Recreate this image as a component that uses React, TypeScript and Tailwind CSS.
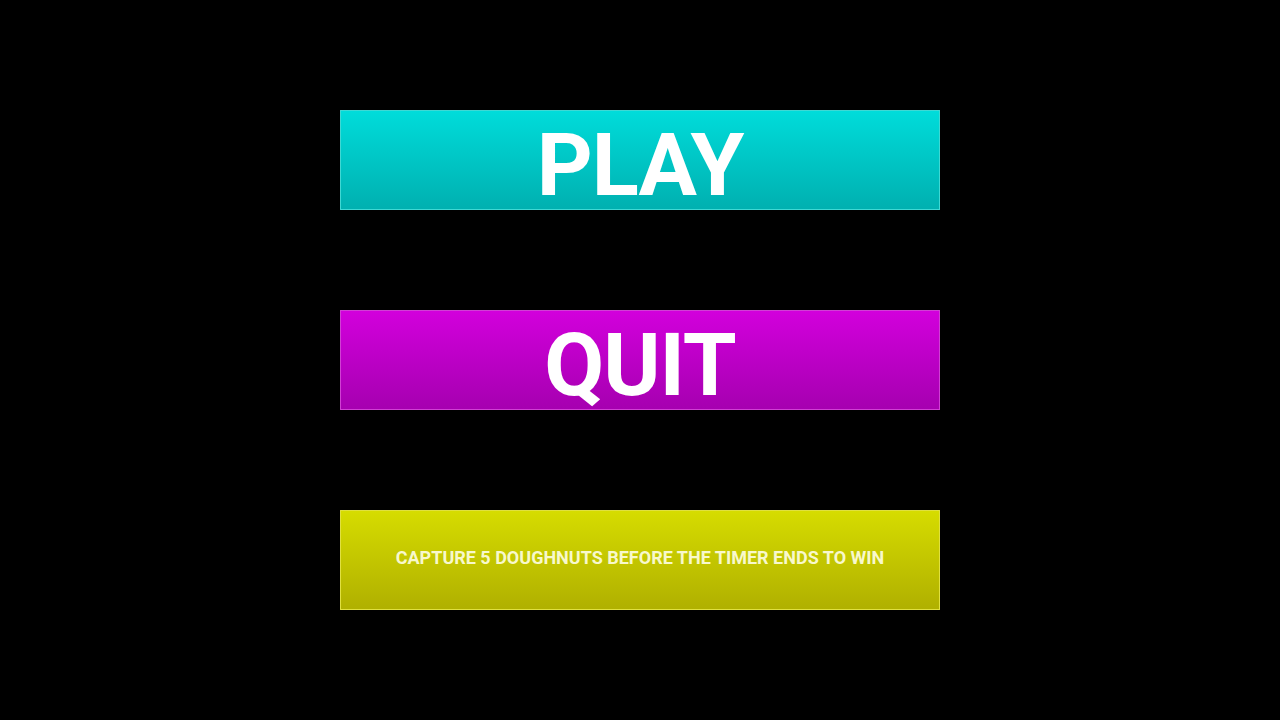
const font = { fontFamily: 'Roboto, "Liberation Sans", sans-serif' };

function App() {
  return (
    <div className="w-full h-[720px] bg-black flex flex-col items-center pt-[110px] gap-[100px]" style={font}>
      <button className="w-[600px] h-[100px] flex items-center justify-center border border-[#3fd8d4] bg-gradient-to-b from-[#00dcda] to-[#00b0b0]">
        <span className="text-[87px] font-bold text-white leading-none tracking-[-1px] pt-[10px]">PLAY</span>
      </button>
      <button className="w-[600px] h-[100px] flex items-center justify-center border border-[#d040d4] bg-gradient-to-b from-[#d200dc] to-[#a600b0]">
        <span className="text-[87px] font-bold text-white leading-none tracking-[-1px] pt-[10px]">QUIT</span>
      </button>
      <div className="w-[600px] h-[100px] flex items-center justify-center border border-[#e0e040] bg-gradient-to-b from-[#d6dc00] to-[#b0b000]">
        <span className="text-[18px] font-bold text-[#f8f8cc] leading-none pb-[4px]">CAPTURE 5 DOUGHNUTS BEFORE THE TIMER ENDS TO WIN</span>
      </div>
    </div>
  );
}

export default App;
